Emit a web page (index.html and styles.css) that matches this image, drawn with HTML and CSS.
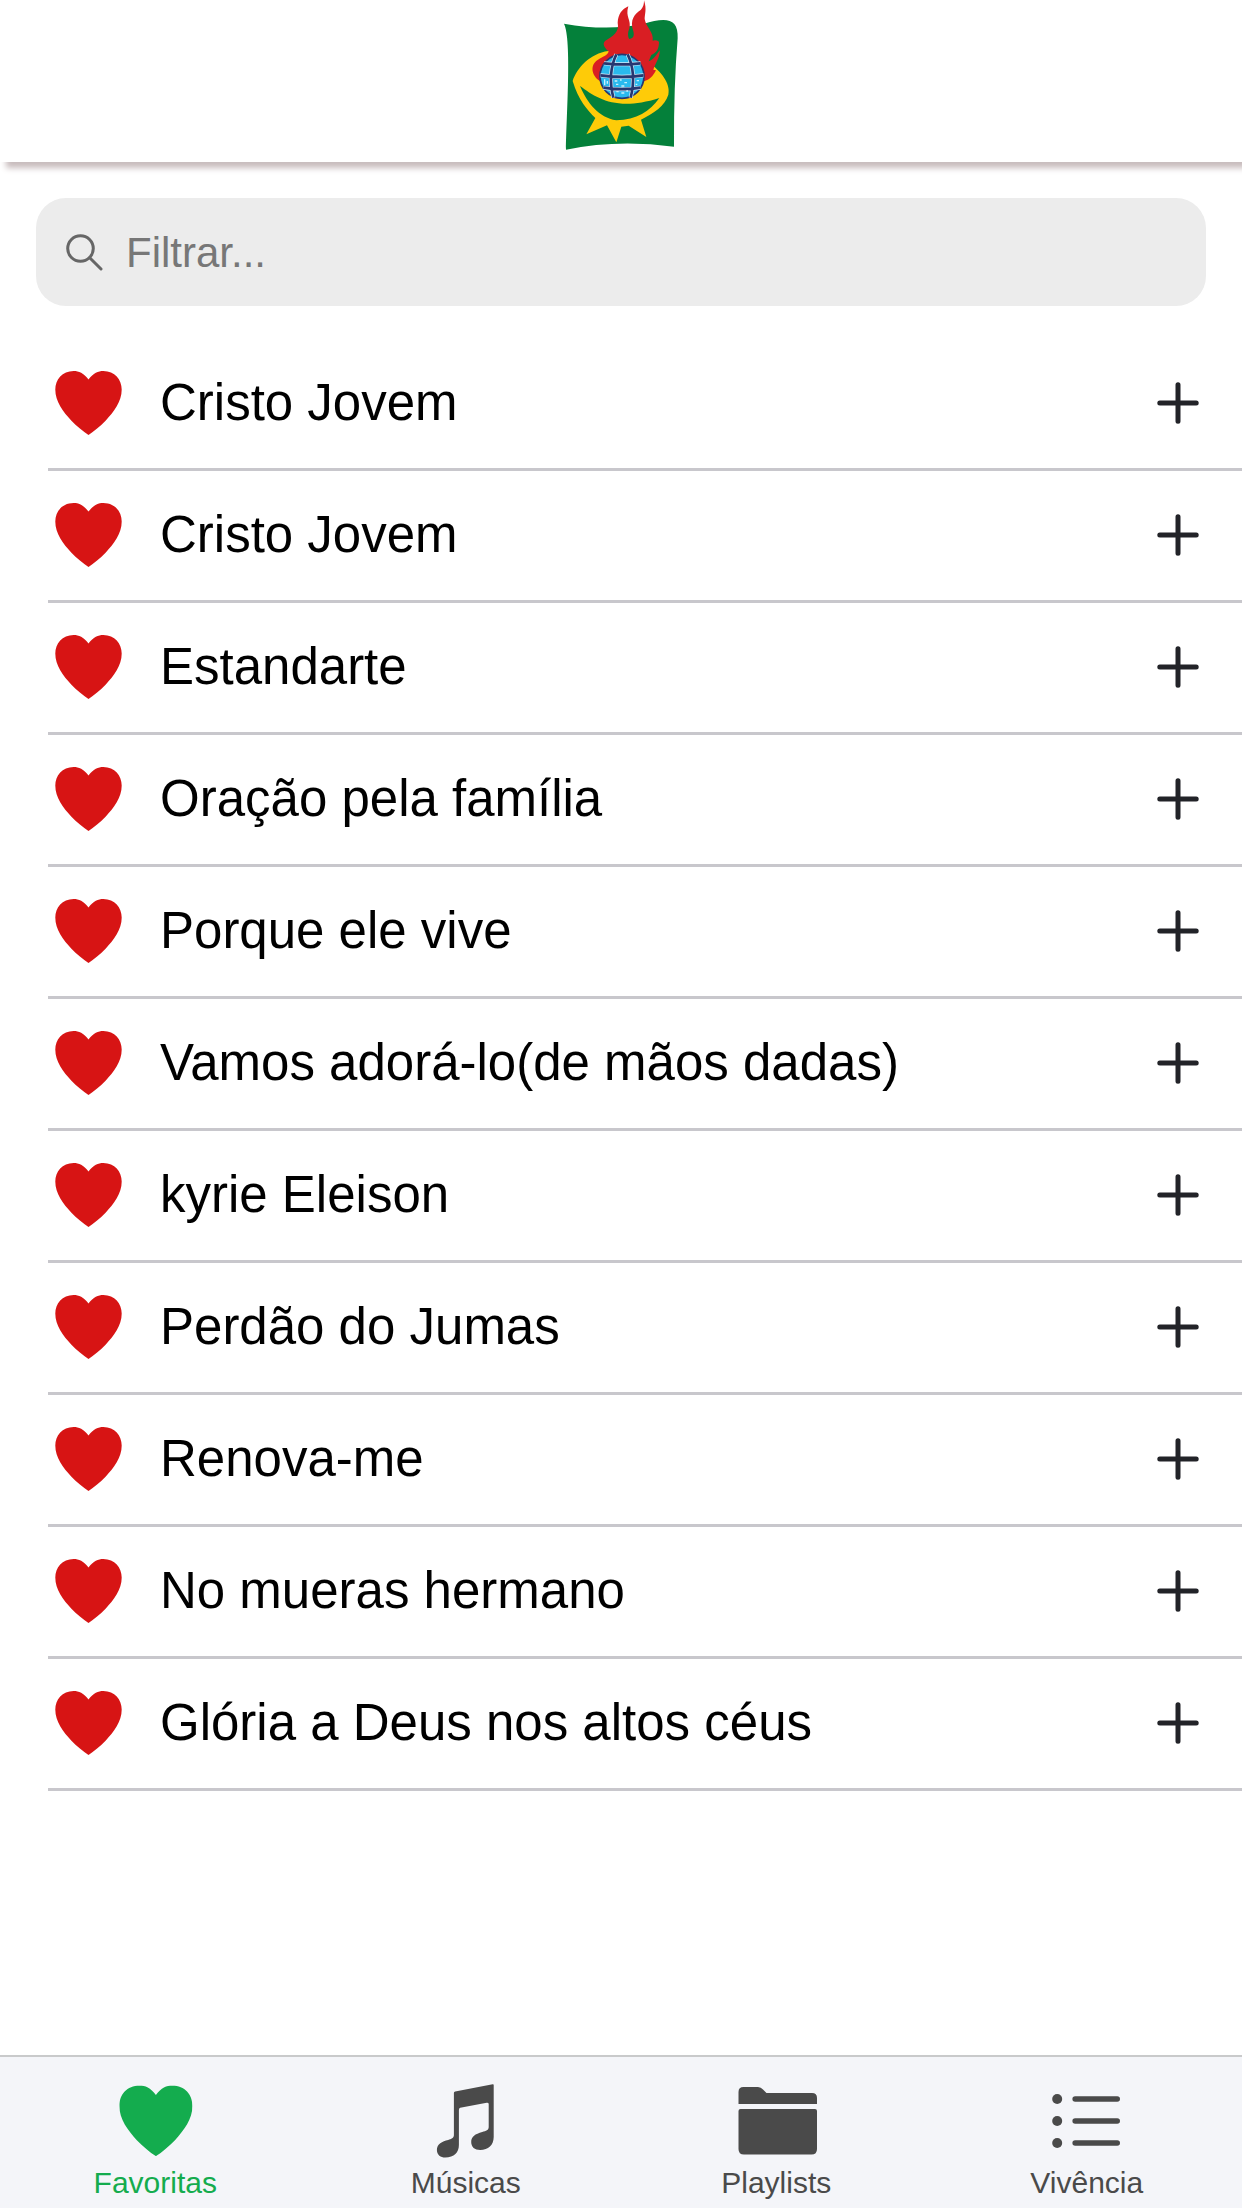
FILE: index.html
```
<!DOCTYPE html>
<html lang="pt-BR">
<head>
<meta charset="utf-8">
<title>Favoritas</title>
<link rel="stylesheet" href="styles.css">
</head>
<body>
<svg class="defs" width="0" height="0">
  <symbol id="heart" viewBox="0 0 66.4 64"><path d="M33.2 8.6C38 2 43 0 48 0 59.500 0 66.400 8.500 66.400 18.600 66.400 30.500 58.500 41 50.500 49.500 45 55.300 38.500 60.500 33.200 64 27.900 60.500 21.400 55.300 15.900 49.500 7.900 41 0 30.500 0 18.600 0 8.500 6.900 0 18.400 0 23.400 0 28.400 2 33.200 8.600Z" fill="currentColor"/></symbol>
  <symbol id="plus" viewBox="0 0 42 42"><path d="M2.800 21H39.200M21 2.800V39.200" stroke="currentColor" stroke-width="5" stroke-linecap="round"/></symbol>
</svg>
<header class="header">
  <svg class="logo" viewBox="0 0 480 486" aria-label="Logo">
    <path d="M72 71Q200 94 310 72C375 52 416 52 413 115Q401 260 402 440Q230 418 78 449C79 350 96 120 72 71Z" fill="#04803a"/>
    <path d="M205 153C150 160 110 205 98 243C115 300 142 330 166 354L139 403L201 376L229 427L244 380L266 377L319 411L303 359C340 340 375 318 385 284C393 248 358 212 337 196Z" fill="#fecb08"/>
    <path d="M120 258C170 295 230 335 358 294C330 333 290 360 229 361C176 352 142 310 120 258Z" fill="#04803a"/>
    <path d="M180 243C155 228 148 194 174 179C190 169 204 166 206 154C194 144 185 131 196 122C219 108 239 96 233 68C234 43 246 27 265 19C255 52 275 60 268 86C262 98 264 112 268 117C278 116 284 110 280 94C268 58 285 42 302 30C311 20 312 12 312 1C321 28 314 43 314 57C318 82 342 96 338 122Q348 119 357 125C357 145 351 157 334 165L326 184C341 180 349 163 360 151C358 177 345 192 340 209L348 211C338 229 330 239 314 243Z" fill="#d91e23"/>
    <circle cx="246" cy="229" r="66" fill="#29b9ee" stroke="#263771" stroke-width="5"/>
    <path d="M192 190Q246 196 302 190M181 226Q246 235 311 226M190 263Q246 272 302 263M229 163Q202 220 220 293M263 163Q290 220 272 293" fill="none" stroke="#d5e9f6" stroke-width="12"/>
    <path d="M192 190Q246 196 302 190M181 226Q246 235 311 226M190 263Q246 272 302 263M229 163Q202 220 220 293M263 163Q290 220 272 293" fill="none" stroke="#263771" stroke-width="8"/>
    <path d="M194 238v17M202 243v8M224 243h8m8-3h5m8 8h8M228 253h7m9 5h9M229 275h7m8 4h9m6-6h5M290 242h7m-10 11h5" stroke="#c9effb" stroke-width="4"/>
  </svg>
</header>
<main class="content">
  <label class="search">
    <svg class="search-icon" viewBox="0 0 37 37"><circle cx="14.500" cy="14.500" r="12.800"/><path d="M23.700 23.700L35 35"/></svg>
    <input class="search-input" type="text" placeholder="Filtrar...">
  </label>
  <ul class="list">
    <li class="row"><svg class="heart"><use href="#heart"/></svg><span class="title">Cristo Jovem</span><svg class="plus"><use href="#plus"/></svg></li>
    <li class="row"><svg class="heart"><use href="#heart"/></svg><span class="title">Cristo Jovem</span><svg class="plus"><use href="#plus"/></svg></li>
    <li class="row"><svg class="heart"><use href="#heart"/></svg><span class="title">Estandarte</span><svg class="plus"><use href="#plus"/></svg></li>
    <li class="row"><svg class="heart"><use href="#heart"/></svg><span class="title">Oração pela família</span><svg class="plus"><use href="#plus"/></svg></li>
    <li class="row"><svg class="heart"><use href="#heart"/></svg><span class="title">Porque ele vive</span><svg class="plus"><use href="#plus"/></svg></li>
    <li class="row"><svg class="heart"><use href="#heart"/></svg><span class="title">Vamos adorá-lo(de mãos dadas)</span><svg class="plus"><use href="#plus"/></svg></li>
    <li class="row"><svg class="heart"><use href="#heart"/></svg><span class="title">kyrie Eleison</span><svg class="plus"><use href="#plus"/></svg></li>
    <li class="row"><svg class="heart"><use href="#heart"/></svg><span class="title">Perdão do Jumas</span><svg class="plus"><use href="#plus"/></svg></li>
    <li class="row"><svg class="heart"><use href="#heart"/></svg><span class="title">Renova-me</span><svg class="plus"><use href="#plus"/></svg></li>
    <li class="row"><svg class="heart"><use href="#heart"/></svg><span class="title">No mueras hermano</span><svg class="plus"><use href="#plus"/></svg></li>
    <li class="row"><svg class="heart"><use href="#heart"/></svg><span class="title">Glória a Deus nos altos céus</span><svg class="plus"><use href="#plus"/></svg></li>
  </ul>
</main>
<nav class="tabs">
  <a class="tab active"><svg class="tab-icon" viewBox="0 0 90 90"><use href="#heart" x="9.300" y="10.600" width="73.200" height="70.500"/></svg><span>Favoritas</span></a>
  <a class="tab"><svg class="tab-icon" viewBox="0.8 0 90 90"><path d="M73.500 10Q73.500 9 72.500 9.200L35 16.500Q33.700 16.800 33.700 18V60C33.700 63 31 64 28 65C22 66.500 16.700 69 16.700 75C16.700 80 20.500 82.500 25 82.500C34 82.500 38.700 77.500 38.700 70V35Q38.700 33 40 32.800L66.500 27.700Q68.500 27.500 68.500 29V52C68.500 55 66 56 62 57C55 59 51 61.500 51 67C51 72 54.500 75 60 75C68 75 73.500 70 73.500 62Z"/></svg><span>Músicas</span></a>
  <a class="tab"><svg class="tab-icon" viewBox="-1 0 90 90"><path d="M6.500 29V17Q6.500 12 11.500 12H26Q29 12 31 14.500L34.500 18H80Q85 18 85 23V29ZM8.500 34H83Q85 34 85 36V74Q85 79.500 79.500 79.500H12Q6.500 79.500 6.500 74V36Q6.500 34 8.500 34Z"/></svg><span>Playlists</span></a>
  <a class="tab"><svg class="tab-icon" viewBox="0.8 0 90 90"><path d="M34 24H76M34 46H76M34 68H76" stroke="currentColor" stroke-width="5.600" stroke-linecap="round"/><circle cx="16" cy="24" r="5"/><circle cx="16" cy="46" r="5"/><circle cx="16" cy="68" r="5"/></svg><span>Vivência</span></a>
</nav>
</body>
</html>
```
FILE: styles.css
```
* { box-sizing: border-box; }
body {
  margin: 0;
  height: 2208px;
  display: flex;
  flex-direction: column;
  overflow: hidden;
  background: #fff;
  font-family: "Liberation Sans", Arial, sans-serif;
}
.defs { display: none; }
.header {
  height: 162px;
  flex: none;
  display: flex;
  justify-content: center;
  padding-right: 2px;
  background: #fff;
  box-shadow: 6px 6px 6px #c8bcbd;
}
.logo { width: 160px; height: 162px; }
.content { flex: 1; padding-top: 36px; }
.search {
  display: flex;
  align-items: center;
  height: 108px;
  margin: 0 36px;
  padding: 0 30px;
  border-radius: 30px;
  background: #ececec;
}
.search-icon {
  width: 37px;
  height: 37px;
  flex: none;
  fill: none;
  stroke: #666;
  stroke-width: 3;
  stroke-linecap: round;
}
.search-input {
  flex: 1;
  margin: 0 0 0 23px;
  padding: 2px 0 0;
  border: 0;
  outline: 0;
  background: transparent;
  font: 42px "Liberation Sans", Arial, sans-serif;
}
.search-input::placeholder { color: #777; opacity: 1; }
.list { margin: 33px 0 0; padding: 0 0 0 48px; list-style: none; }
.row {
  display: flex;
  align-items: center;
  height: 132px;
  padding: 0 43px 1px 7px;
  border-bottom: 3px solid #c8c7cc;
}
.heart { width: 67px; height: 64px; color: #d71414; flex: none; }
.title { flex: 1; margin-left: 38px; padding-bottom: 1px; font-size: 51px; line-height: 60px; white-space: nowrap; }
.plus { width: 42px; height: 42px; color: #222328; flex: none; }
.tabs {
  display: grid;
  grid-template-columns: repeat(4, 1fr);
  height: 153px;
  flex: none;
  border-top: 2px solid #c9cacb;
  background: #f4f5f9;
}
.tab {
  display: flex;
  flex-direction: column;
  align-items: center;
  padding-top: 18px;
  color: #4a4a4a;
  font-size: 30px;
  line-height: 36px;
}
.tab-icon { width: 90px; height: 90px; fill: currentColor; }
.active { color: #14ac4e; }
```
